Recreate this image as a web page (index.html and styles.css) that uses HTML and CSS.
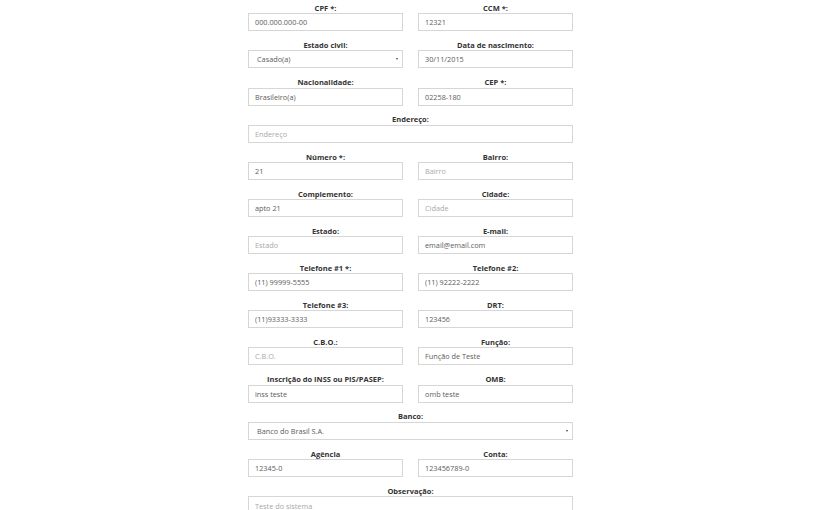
FILE: index.html
```html
<!DOCTYPE html>
<html lang="pt-BR">
<head>
<meta charset="utf-8">
<title>Cadastro</title>
<link rel="stylesheet" href="styles.css">
</head>
<body>
<form class="form">
  <div class="field"><label>CPF *:</label><input type="text" value="000.000.000-00"></div>
  <div class="field"><label>CCM *:</label><input type="text" value="12321"></div>

  <div class="field"><label>Estado civil:</label><div class="select-wrap"><select><option>Casado(a)</option></select></div></div>
  <div class="field"><label>Data de nascimento:</label><input type="text" value="30/11/2015"></div>

  <div class="field"><label>Nacionalidade:</label><input type="text" value="Brasileiro(a)"></div>
  <div class="field"><label>CEP *:</label><input type="text" value="02258-180"></div>

  <div class="field full"><label>Endereço:</label><input type="text" placeholder="Endereço"></div>

  <div class="field"><label>Número *:</label><input type="text" value="21"></div>
  <div class="field"><label>Bairro:</label><input type="text" placeholder="Bairro"></div>

  <div class="field"><label>Complemento:</label><input type="text" value="apto 21"></div>
  <div class="field"><label>Cidade:</label><input type="text" placeholder="Cidade"></div>

  <div class="field"><label>Estado:</label><input type="text" placeholder="Estado"></div>
  <div class="field"><label>E-mail:</label><input type="text" value="email@email.com"></div>

  <div class="field"><label>Telefone #1 *:</label><input type="text" value="(11) 99999-5555"></div>
  <div class="field"><label>Telefone #2:</label><input type="text" value="(11) 92222-2222"></div>

  <div class="field"><label>Telefone #3:</label><input type="text" value="(11)93333-3333"></div>
  <div class="field"><label>DRT:</label><input type="text" value="123456"></div>

  <div class="field"><label>C.B.O.:</label><input type="text" placeholder="C.B.O."></div>
  <div class="field"><label>Função:</label><input type="text" value="Função de Teste"></div>

  <div class="field"><label>Inscrição do INSS ou PIS/PASEP:</label><input type="text" value="inss teste"></div>
  <div class="field"><label>OMB:</label><input type="text" value="omb teste"></div>

  <div class="field full"><label>Banco:</label><div class="select-wrap"><select><option>Banco do Brasil S.A.</option></select></div></div>

  <div class="field"><label>Agência</label><input type="text" value="12345-0"></div>
  <div class="field"><label>Conta:</label><input type="text" value="123456789-0"></div>

  <div class="field full"><label>Observação:</label><textarea placeholder="Teste do sistema"></textarea></div>
</form>
</body>
</html>
```
FILE: styles.css
```css
html, body {
  margin: 0;
  padding: 0;
  background: #ffffff;
  overflow: hidden;
}

body {
  font-family: "Open Sans", "DejaVu Sans", sans-serif;
  color: #333333;
}

.form {
  width: 325px;
  margin-left: 248px;
  padding-top: 3.1px;
  display: grid;
  grid-template-columns: 1fr 1fr;
  column-gap: 15px;
  row-gap: 8.95px;
}

.field {
  display: flex;
  flex-direction: column;
  min-width: 0;
}

.field.full {
  grid-column: 1 / -1;
}

.field label {
  display: block;
  text-align: center;
  font-size: 7.5px;
  font-weight: 700;
  line-height: 10px;
  margin-bottom: 0.2px;
  color: #333333;
}

.field input,
.field select,
.field textarea {
  display: block;
  box-sizing: border-box;
  width: 100%;
  height: 18px;
  margin: 0;
  border: 1px solid #d6d6d6;
  border-radius: 0;
  background: #ffffff;
  font-family: "Open Sans", "DejaVu Sans", sans-serif;
  font-size: 7.3px;
  color: #5c5c5c;
  padding: 0 6px;
  outline: none;
}

.field input::placeholder,
.field textarea::placeholder {
  color: #a9a9a9;
  opacity: 1;
}

.select-wrap {
  position: relative;
  height: 18px;
}

.field select {
  -webkit-appearance: none;
  appearance: none;
  padding-left: 8px;
}

.select-wrap::after {
  content: "";
  position: absolute;
  right: 5px;
  top: 8px;
  border-left: 1.5px solid transparent;
  border-right: 1.5px solid transparent;
  border-top: 2.5px solid #444444;
}

.field textarea {
  height: 34px;
  padding-top: 4px;
  resize: none;
  line-height: 10px;
}
```
